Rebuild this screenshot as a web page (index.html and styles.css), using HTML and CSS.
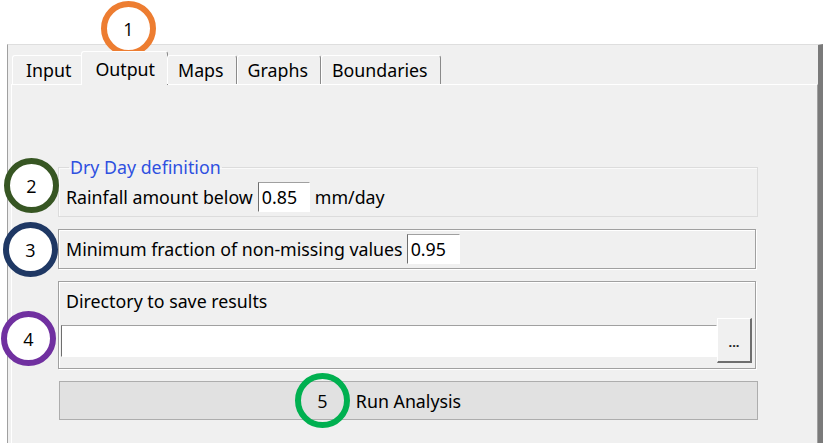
FILE: index.html
```html
<!DOCTYPE html>
<html>
<head>
<meta charset="utf-8">
<link rel="stylesheet" href="styles.css">
</head>
<body>
<div class="window">
  <div class="tabs">
    <div class="tab first">Input</div>
    <div class="tab active">Output</div>
    <div class="tab">Maps</div>
    <div class="tab">Graphs</div>
    <div class="tab">Boundaries</div>
  </div>
  <div class="panel">
    <fieldset class="group">
      <legend>Dry Day definition</legend>
      <div class="row">
        <span>Rainfall amount below</span>
        <div class="field f-rain">0.85</div>
        <span class="unit">mm/day</span>
      </div>
    </fieldset>
    <div class="box frac">
      <span>Minimum fraction of non-missing values</span>
      <div class="field f-frac">0.95</div>
    </div>
    <div class="box dir">
      <div class="dir-label">Directory to save results</div>
      <div class="dir-row">
        <div class="field f-dir"></div>
        <div class="browse">...</div>
      </div>
    </div>
    <div class="run">Run Analysis</div>
  </div>
</div>
<div class="marker m1">1</div>
<div class="marker m2">2</div>
<div class="marker m3">3</div>
<div class="marker m4">4</div>
<div class="marker m5">5</div>
</body>
</html>
```
FILE: styles.css
```css
html, body {
  margin: 0;
  height: 100%;
  background: #ffffff;
  font-family: "Noto Sans", "Open Sans", sans-serif;
  font-size: 17.8px;
  color: #000;
}
body {
  position: relative;
  overflow: hidden;
}
.window {
  margin: 44px 0 0 7px;
  height: 399px;
  box-sizing: border-box;
  background: #f0f0f0;
  border-left: 1px solid #a0a0a0;
  border-top: 1px solid #dedede;
  border-right: 5px solid #7a7a7a;
  padding: 6px 0 0 3px;
  display: flex;
  flex-direction: column;
}
.tabs {
  display: flex;
  align-items: flex-end;
  height: 33px;
  padding-left: 1px;
  position: relative;
  z-index: 1;
}
.tab {
  height: 29px;
  box-sizing: border-box;
  padding: 3px 12px 0 10px;
  line-height: 22px;
  border: 1px solid #fff;
  border-right-color: #8a8a8a;
  border-bottom: none;
  border-radius: 3px 3px 0 0;
  white-space: nowrap;
}
.tab.first { padding-left: 13px; padding-right: 11px; }
.tab.active {
  height: 34px;
  margin: 0 -1px -1px -2px;
  padding: 6px 12px 0 13px;
  background: #f0f0f0;
}
.panel {
  flex: 1;
  border-top: 1px solid #fff;
  border-left: 1px solid #fff;
  border-right: 1px solid #a0a0a0;
  padding: 71px 59px 0 46px;
}
.group {
  margin: 0;
  padding: 0 7px 4px;
  border: 1px solid #dcdcdc;
  box-shadow: inset 1px 1px 0 #fafafa;
  min-width: 0;
}
.group legend {
  margin-left: 3px;
  padding: 0 1px;
  line-height: 22px;
  color: #2f50e0;
}
.row {
  display: flex;
  align-items: center;
  height: 30px;
  margin-top: 4px;
}
.field {
  box-sizing: border-box;
  background: #fff;
  border-top: 1px solid #a0a0a0;
  border-left: 1px solid #6e6e6e;
  border-right: 1px solid #fff;
  border-bottom: 1px solid #fff;
  padding-left: 3px;
  line-height: 28px;
}
.f-rain { width: 52px; height: 30px; margin-left: 5px; }
.unit { margin-left: 5px; }
.box {
  border: 1px solid #a0a0a0;
  box-shadow: inset 1px 1px 0 #fff, 1px 1px 0 #fff;
  margin-right: 2px;
}
.frac {
  margin-top: 12px;
  height: 40px;
  box-sizing: border-box;
  display: flex;
  align-items: center;
  padding-left: 7px;
}
.f-frac { width: 53px; height: 30px; margin-left: 4px; }
.dir {
  margin-top: 12px;
  height: 88px;
  box-sizing: border-box;
  padding: 0 3px 0 2px;
}
.dir-label {
  margin-top: 8px;
  padding-left: 5px;
  line-height: 22px;
}
.dir-row {
  display: flex;
  align-items: center;
  margin-top: 6px;
}
.f-dir { flex: 1; height: 32px; }
.browse {
  width: 35px;
  height: 45px;
  box-sizing: border-box;
  border-top: 1px solid #fff;
  border-left: 1px solid #fff;
  border-right: 2px solid #6e6e6e;
  border-bottom: 2px solid #6e6e6e;
  background: #f0f0f0;
  display: flex;
  align-items: center;
  justify-content: center;
  font-size: 13px;
  font-weight: bold;
  color: #222;
  padding-top: 4px;
}
.run {
  margin: 12px 0 0 1px;
  height: 39px;
  box-sizing: border-box;
  background: #e1e1e1;
  border: 1px solid #adadad;
  display: flex;
  align-items: center;
  justify-content: center;
}
.marker {
  position: absolute;
  width: 55px;
  height: 55px;
  box-sizing: border-box;
  border: 6px solid;
  border-radius: 50%;
  background: #fff;
  display: flex;
  align-items: center;
  justify-content: center;
  font-family: "Open Sans", sans-serif;
  font-size: 18px;
  color: #000;
}
.m1 { left: 101px; top: 1px; border-color: #ed7d31; }
.m2 { left: 4px; top: 158px; border-color: #375623; }
.m3 { left: 3px; top: 222px; border-color: #1f3864; }
.m4 { left: 1px; top: 311px; border-color: #7030a0; }
.m5 { left: 295px; top: 373px; border-color: #00b050; background: transparent; }
```
